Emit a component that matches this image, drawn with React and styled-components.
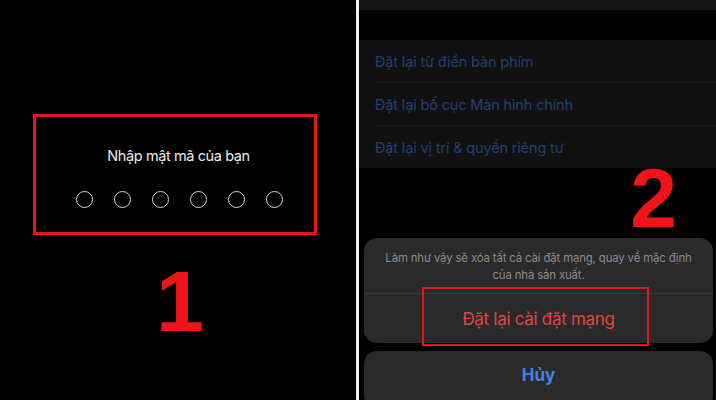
import React from "react";
import styled, { createGlobalStyle } from "styled-components";

const Global = createGlobalStyle`
  html, body { margin: 0; padding: 0; background: #000; }
  * { box-sizing: border-box; }
`;

const Frame = styled.div`
  width: 716px;
  height: 400px;
  display: flex;
  background: #000;
  overflow: hidden;
  font-family: Inter, "Liberation Sans", sans-serif;
`;

const LeftPanel = styled.div`
  width: 356px;
  flex: none;
  display: flex;
  flex-direction: column;
  align-items: flex-start;
  padding: 114px 0 0 33px;
  background: #000;
`;

const Divider = styled.div`
  width: 3px;
  flex: none;
  background: #f2f2f2;
`;

const HighlightBox = styled.div`
  width: 284px;
  height: 121px;
  border: 3px solid #e0171c;
  display: flex;
  flex-direction: column;
  align-items: center;
  padding-top: 30px;
  gap: 26px;
`;

const Prompt = styled.div`
  color: #ececec;
  font-size: 14.5px;
  line-height: 18px;
  letter-spacing: -0.4px;
  padding-left: 7px;
`;

const Dots = styled.div`
  display: flex;
  gap: 21px;
  padding-left: 9px;
`;

const Dot = styled.span`
  width: 17px;
  height: 17px;
  border-radius: 50%;
  border: 1.5px solid #d6d6d6;
`;

const StepRow = styled.div`
  display: flex;
  justify-content: ${(p) => p.$align || "center"};
  width: ${(p) => p.$width || "auto"};
  height: ${(p) => p.$height || "auto"};
  margin-top: ${(p) => p.$mt || "0"};
  padding-left: ${(p) => p.$pl || "0"};
  padding-right: ${(p) => p.$pr || "0"};
  align-items: flex-start;
`;

const StepNumber = styled.span`
  font-family: "Liberation Sans", Arial, sans-serif;
  font-weight: 700;
  font-size: ${(p) => p.$size}px;
  line-height: 1;
  color: #f0141a;
  margin-top: ${(p) => p.$mt || "0"};
`;

const RightPanel = styled.div`
  flex: 1;
  display: flex;
  flex-direction: column;
  background: #000;
  overflow: hidden;
`;

const TopStrip = styled.div`
  height: 10px;
  background: #161617;
  flex: none;
`;

const SettingsCard = styled.div`
  margin-top: 30px;
  background: #111112;
  display: flex;
  flex-direction: column;
  flex: none;
`;

const SettingsRow = styled.div`
  height: ${(p) => p.$h}px;
  display: flex;
  align-items: center;
  margin-left: 16px;
  color: #22406f;
  font-size: 14.5px;
  letter-spacing: -0.15px;
  border-bottom: ${(p) => (p.$last ? "none" : "1px solid #1b1b1d")};
`;

const Sheet = styled.div`
  margin: 0 3px 0 5px;
  background: #2a2a2b;
  border-radius: 13px;
  display: flex;
  flex-direction: column;
  flex: none;
`;

const SheetMessage = styled.div`
  height: 56px;
  padding: 12px 20px 0;
  text-align: center;
  color: #8c8c8e;
  font-size: 11.4px;
  letter-spacing: -0.15px;
  line-height: 17px;
  border-bottom: 1px solid #3a3a3c;
`;

const SheetAction = styled.div`
  position: relative;
  height: 49px;
  display: flex;
  align-items: center;
  justify-content: center;
  color: #e0463e;
  font-size: 17px;
  letter-spacing: -0.3px;
`;

const ActionHighlight = styled.span`
  position: absolute;
  left: 58px;
  top: -7px;
  width: 227px;
  height: 59px;
  border: 2.5px solid #d81b1b;
`;

const CancelButton = styled.div`
  margin: 8px 3px 0 5px;
  height: 58px;
  flex: none;
  background: #2a2a2b;
  border-radius: 13px;
  display: flex;
  justify-content: center;
  padding-top: 14px;
  color: #3f86e2;
  font-weight: 700;
  font-size: 17px;
`;

const settings = [
  "Đặt lại từ điển bàn phím",
  "Đặt lại bố cục Màn hình chính",
  "Đặt lại vị trí & quyền riêng tư",
];

export default function App() {
  return (
    <>
      <Global />
      <Frame>
        <LeftPanel>
          <HighlightBox>
            <Prompt>Nhập mật mã của bạn</Prompt>
            <Dots>
              {Array.from({ length: 6 }).map((_, i) => (
                <Dot key={i} />
              ))}
            </Dots>
          </HighlightBox>
          <StepRow $width="284px" $mt="23px" $pl="10px">
            <StepNumber $size={86}>1</StepNumber>
          </StepRow>
        </LeftPanel>
        <Divider />
        <RightPanel>
          <TopStrip />
          <SettingsCard>
            {settings.map((s, i) => (
              <SettingsRow key={s} $h={i === 2 ? 42 : 43} $last={i === 2}>
                {s}
              </SettingsRow>
            ))}
          </SettingsCard>
          <StepRow $align="flex-end" $height="70px" $pr="39px">
            <StepNumber $size={84} $mt="-12px">2</StepNumber>
          </StepRow>
          <Sheet>
            <SheetMessage>
              Làm như vậy sẽ xóa tất cả cài đặt mạng, quay về mặc định của nhà sản xuất.
            </SheetMessage>
            <SheetAction>
              Đặt lại cài đặt mạng
              <ActionHighlight />
            </SheetAction>
          </Sheet>
          <CancelButton>Hủy</CancelButton>
        </RightPanel>
      </Frame>
    </>
  );
}
